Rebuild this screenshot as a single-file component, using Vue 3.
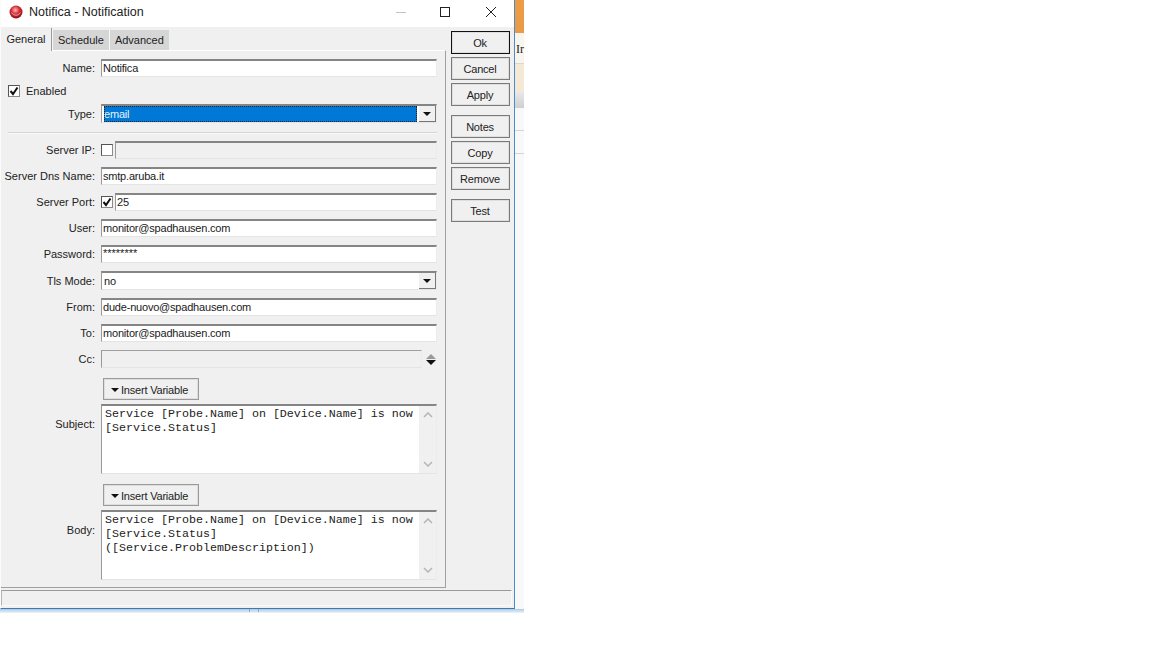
<template>
  <div class="desk">
    <div class="behind">
      <div class="b-orange"></div>
      <div class="b-white"><span>Ir</span></div>
      <div class="b-cream"></div>
      <div class="b-grey"></div>
      <div class="b-line"></div>
      <div class="b-line"></div>
      <div class="b-rest"></div>
    </div>
    <div class="under"><i></i><i></i></div>

    <div class="window">
      <div class="titlebar">
        <svg class="app-icon" width="16" height="16" viewBox="0 0 16 16">
          <defs>
            <radialGradient id="ball" cx="0.45" cy="0.35" r="0.7">
              <stop offset="0" stop-color="#f7b9b9" />
              <stop offset="0.45" stop-color="#d92c35" />
              <stop offset="1" stop-color="#7d0c16" />
            </radialGradient>
          </defs>
          <circle cx="8" cy="8" r="6.5" fill="url(#ball)" />
          <path d="M3.5 8.5a5 5 0 0 0 9 0" fill="none" stroke="#fff" stroke-opacity=".55" />
        </svg>
        <span class="title">Notifica - Notification</span>
        <svg class="caption min" width="12" height="12" viewBox="0 0 12 12"><path d="M1 6.500h10" stroke="#c4c4c4" /></svg>
        <svg class="caption max" width="12" height="12" viewBox="0 0 12 12"><rect x="1.500" y="1.500" width="9" height="9" fill="none" stroke="#222" /></svg>
        <svg class="caption close" width="12" height="12" viewBox="0 0 12 12"><path d="M1 1l10 10M11 1L1 11" stroke="#222" fill="none" /></svg>
      </div>

      <div class="body">
        <div class="left">
          <div class="tabs">
            <div class="tab active">General</div>
            <div class="tab">Schedule</div>
            <div class="tab">Advanced</div>
          </div>
          <div class="panel">
            <div class="row r-first">
              <label>Name:</label>
              <div class="field">Notifica</div>
            </div>
            <div class="enabled">
              <span class="check on"><svg width="10" height="10" viewBox="0 0 10 10"><path d="M1.500 5l2.500 3 4.500-6.500" fill="none" stroke="#111" stroke-width="2" /></svg></span>
              <span>Enabled</span>
            </div>
            <div class="row r-type">
              <label>Type:</label>
              <div class="field select">
                <span class="selected">email</span>
                <span class="drop"><i></i></span>
              </div>
            </div>
            <div class="divider"></div>

            <div class="row">
              <label>Server IP:</label>
              <span class="check"></span>
              <div class="field off grow"></div>
            </div>
            <div class="row">
              <label>Server Dns Name:</label>
              <div class="field">smtp.aruba.it</div>
            </div>
            <div class="row">
              <label>Server Port:</label>
              <span class="check on"><svg width="10" height="10" viewBox="0 0 10 10"><path d="M1.500 5l2.500 3 4.500-6.500" fill="none" stroke="#111" stroke-width="2" /></svg></span>
              <div class="field grow">25</div>
            </div>
            <div class="row">
              <label>User:</label>
              <div class="field">monitor@spadhausen.com</div>
            </div>
            <div class="row">
              <label>Password:</label>
              <div class="field pass">********</div>
            </div>
            <div class="row r-tls">
              <label>Tls Mode:</label>
              <div class="field select">
                <span>no</span>
                <span class="drop"><i></i></span>
              </div>
            </div>
            <div class="row">
              <label>From:</label>
              <div class="field">dude-nuovo@spadhausen.com</div>
            </div>
            <div class="row">
              <label>To:</label>
              <div class="field">monitor@spadhausen.com</div>
            </div>
            <div class="row r-cc">
              <label>Cc:</label>
              <div class="field cc"></div>
              <span class="updown"><i class="up"></i><i class="down"></i></span>
            </div>

            <div class="insert-row"><button class="btn insert"><i></i>Insert Variable</button></div>
            <div class="row r-area">
              <label>Subject:</label>
              <div class="field area">
                <div class="mono">Service [Probe.Name] on [Device.Name] is now<br>[Service.Status]</div>
                <div class="scroll"><svg width="10" height="6" viewBox="0 0 10 6"><path d="M1 5l4-4 4 4" fill="none" stroke="#b5b5b5" stroke-width="1.500" /></svg><svg width="10" height="6" viewBox="0 0 10 6"><path d="M1 1l4 4 4-4" fill="none" stroke="#b5b5b5" stroke-width="1.500" /></svg></div>
              </div>
            </div>

            <div class="insert-row"><button class="btn insert"><i></i>Insert Variable</button></div>
            <div class="row r-area">
              <label>Body:</label>
              <div class="field area">
                <div class="mono">Service [Probe.Name] on [Device.Name] is now<br>[Service.Status]<br>([Service.ProblemDescription])</div>
                <div class="scroll"><svg width="10" height="6" viewBox="0 0 10 6"><path d="M1 5l4-4 4 4" fill="none" stroke="#b5b5b5" stroke-width="1.500" /></svg><svg width="10" height="6" viewBox="0 0 10 6"><path d="M1 1l4 4 4-4" fill="none" stroke="#b5b5b5" stroke-width="1.500" /></svg></div>
              </div>
            </div>
          </div>
        </div>

        <div class="actions">
          <button class="btn default">Ok</button>
          <button class="btn">Cancel</button>
          <button class="btn">Apply</button>
          <button class="btn sep">Notes</button>
          <button class="btn">Copy</button>
          <button class="btn">Remove</button>
          <button class="btn sep">Test</button>
        </div>
      </div>

      <div class="status"></div>
    </div>
  </div>
</template>

<script setup>
</script>

<style scoped>
.desk {
  position: relative;
  width: 1152px; height: 648px;
  background: #fff;
  overflow: hidden;
  font-family: "Liberation Sans", Arial, sans-serif;
  font-size: 11px;
  color: #1a1a1a;
}

/* what shows of the app behind the dialog */
.behind {
  position: absolute; left: 515px; top: 0;
  width: 9px; height: 612px;
  display: flex; flex-direction: column;
  background: #f8f8f8;
}
.b-orange { height: 33px; flex: none; background: linear-gradient(#ee9d45, #e99a48); }
.b-white { height: 31px; flex: none; background: #faf5ec; border-bottom: 1px solid #dcd6cc; font-family: "Liberation Serif", serif; font-size: 12px; color: #222; padding: 9px 0 0 1px; box-sizing: border-box; white-space: nowrap; }
.b-cream { height: 28px; flex: none; background: #f5e8d5; }
.b-grey { height: 16px; flex: none; background: linear-gradient(#e8e8e8, #cfcfcf); }
.b-line { height: 22px; flex: none; background: #f8f8f8; border-bottom: 1px solid #d4d4d4; }
.b-rest { flex: 1; }
.under {
  position: absolute; left: 0; top: 609px;
  width: 524px; height: 4px;
  background: linear-gradient(#a9cbe6, #eef3f8);
  display: flex; gap: 8px; padding-left: 249px; box-sizing: border-box;
}
.under i { width: 1px; height: 3px; background: #9aa6b0; }

.window {
  position: absolute; left: 0; top: 0;
  width: 515px; height: 609px;
  box-sizing: border-box;
  background: #f0f0f0;
  border-left: 1px solid #fbfbfb;
  border-right: 1px solid #4a8cc8;
  border-bottom: 1px solid #3f78b0;
  display: flex; flex-direction: column;
}

.titlebar {
  height: 27px; flex: none;
  background: #fff;
  display: flex; align-items: center;
  padding: 0 17px 4px 7px;
  box-sizing: border-box;
}
.app-icon { margin-right: 5px; }
.title { font-size: 12.500px; color: #222; flex: 1; }
.caption { flex: none; }
.min { margin-right: 32px; }
.max { margin-right: 34px; }

.body { flex: 1; display: flex; min-height: 0; }
.left { width: 445px; flex: none; display: flex; flex-direction: column; }

.tabs { display: flex; height: 23px; align-items: flex-end; flex: none; }
.tab {
  height: 20px; line-height: 21px;
  padding: 0 5px;
  background: #d6d6d6;
  border-left: 1px solid #f8f8f8;
  color: #222;
  box-sizing: border-box;
}
.tab.active {
  width: 51px; height: 23px; line-height: 22px;
  background: #f0f0f0;
  padding: 0; text-align: center;
  border-left: none;
  border-right: 1px solid #9a9a9a;
  margin-bottom: -1px;
  position: relative; z-index: 1;
}

.panel {
  flex: 1;
  border-top: 1px solid #fff;
  border-right: 1px solid #a0a0a0;
  border-bottom: 1px solid #a0a0a0;
  box-sizing: border-box;
  padding-top: 8px;
  display: flex; flex-direction: column;
}

.row { display: flex; align-items: center; height: 18px; margin-bottom: 8px; padding-right: 8px; }
.row label { width: 94px; flex: none; text-align: right; margin-right: 6px; white-space: nowrap; color: #222; }

.field {
  flex: 1; height: 18px;
  box-sizing: border-box;
  background: #fff;
  border-top: 2px solid #858585;
  border-left: 1px solid #9a9a9a;
  border-right: 1px solid #ececec;
  border-bottom: 1px solid #e4e4e4;
  line-height: 15px;
  padding-left: 1px;
  letter-spacing: -0.2px;
  white-space: nowrap; overflow: hidden;
}
.field.grow { margin-left: 2px; }
.field.off { background: #f0f0f0; }
.pass { line-height: 13px; letter-spacing: 0; }

.check {
  width: 12px; height: 12px; flex: none;
  box-sizing: border-box;
  background: #fff;
  border: 1px solid #8a8a8a;
  border-top-color: #555;
  border-left-color: #555;
  display: flex; align-items: center; justify-content: center;
}

.enabled {
  display: flex; align-items: center; gap: 6px;
  height: 18px; margin: -3px 0 4px 7px;
  color: #222;
}

.r-type { height: 19px; margin-bottom: 9px; }
.r-tls { height: 19px; margin-bottom: 8px; }
.select { height: 19px; display: flex; align-items: stretch; padding-left: 2px; padding-right: 0; line-height: 16px; position: relative; }
.select > span:first-child { flex: 1; }
.selected {
  background: #0078d7; color: #e8f2fb;
  outline: 1px dotted #222; outline-offset: -1px;
}
.drop {
  width: 16px; flex: none; margin: 0 0 0 2px;
  background: #f0f0f0;
  border-right: 1px solid #777; border-bottom: 1px solid #777;
  display: flex; align-items: center; justify-content: center;
}
.drop i, .insert i {
  width: 0; height: 0; display: inline-block;
  border-left: 4px solid transparent; border-right: 4px solid transparent;
  border-top: 4px solid #111;
}

.divider {
  height: 1px; background: #d4d4d4;
  border-bottom: 1px solid #fafafa;
  margin: 0 8px 7px 7px;
}

.r-cc { margin-bottom: 10px; padding-right: 9px; }
.cc { background: #f0f0f0; margin-right: 4px; border-top: 1px solid #a0a0a0; }
.updown { width: 10px; flex: none; display: flex; flex-direction: column; gap: 1px; align-items: center; }
.updown i { width: 0; height: 0; border-left: 5px solid transparent; border-right: 5px solid transparent; }
.updown .up { border-bottom: 5px solid #999; }
.updown .down { border-top: 5px solid #111; }

.insert-row { padding-left: 102px; height: 22px; margin-bottom: 4px; }
.r-area { height: 70px; margin-bottom: 10px; }
.r-area:last-child { margin-bottom: 0; }
.r-area label { align-self: flex-start; margin-top: 14px; }
.area { height: 70px; display: flex; padding-left: 2px; padding-right: 0; line-height: 14px; letter-spacing: 0; }
.mono {
  flex: 1;
  font-family: "Liberation Mono", "Courier New", monospace;
  font-size: 11.670px;
  padding: 1px 0 0 1px;
  color: #222;
}
.scroll {
  width: 17px; flex: none;
  background: #f0f0f0;
  display: flex; flex-direction: column; justify-content: space-between; align-items: center;
  padding: 6px 0;
  box-sizing: border-box;
}

.btn {
  display: block;
  box-sizing: border-box;
  background: #f0f0f0;
  border: 1px solid #7a7a7a;
  box-shadow: inset 0 0 0 1px #dedede;
  font: inherit; color: #222;
  letter-spacing: -0.2px;
  padding: 1px 1px 0 0;
}
.insert { width: 96px; height: 22px; display: flex; align-items: center; gap: 2px; padding-left: 7px; border-color: #9a9a9a; }

.actions {
  flex: 1;
  display: flex; flex-direction: column; gap: 3px;
  padding: 4px 0 0 5px;
}
.actions .btn { width: 59px; height: 23px; }
.actions .default { border-color: #111; }
.actions .sep { margin-top: 6px; }

.status {
  flex: none; height: 16px;
  margin: 2px 2px 2px 0;
  background: #f0f0f0;
  border-top: 1px solid #9a9a9a;
  border-left: 1px solid #b5b5b5;
  border-right: 1px solid #fafafa;
  border-bottom: 1px solid #fafafa;
  box-sizing: border-box;
}
</style>
